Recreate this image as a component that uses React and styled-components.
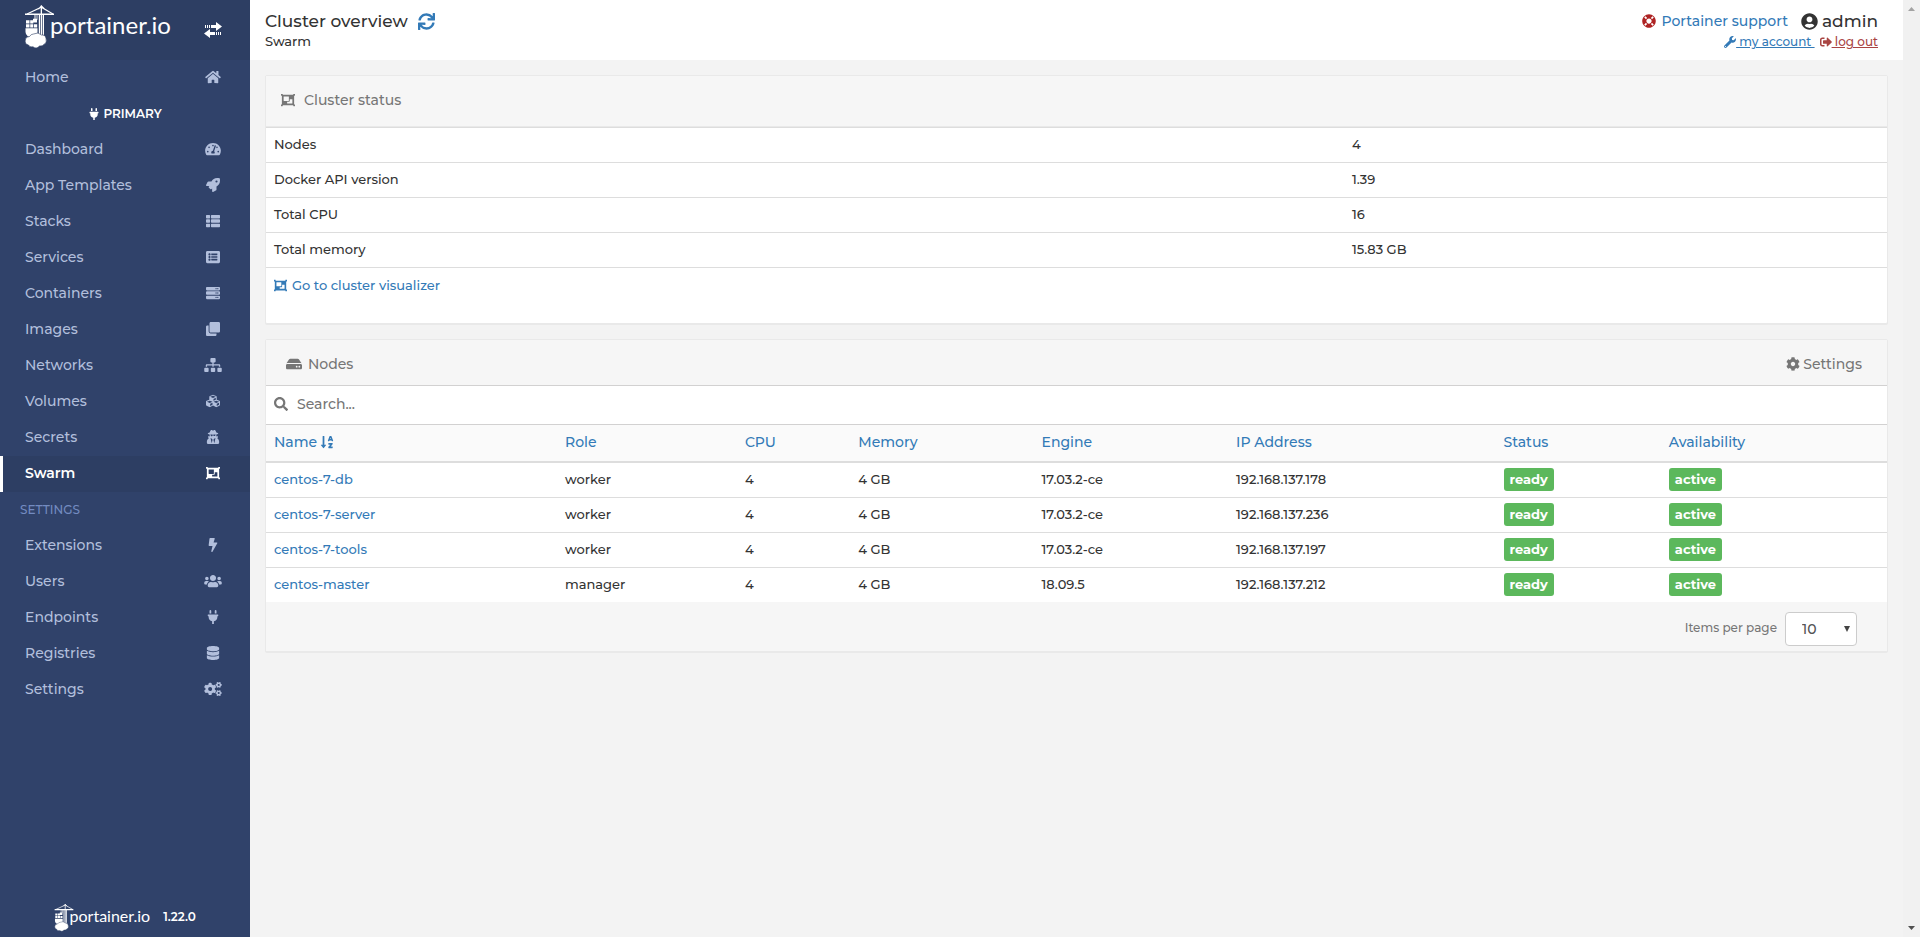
import React from 'react';
import styled, { createGlobalStyle, css } from 'styled-components';
import {
  FaHome, FaPlug, FaTachometerAlt, FaRocket, FaThList, FaListAlt, FaServer, FaClone, FaSitemap,
  FaCubes, FaUserSecret, FaObjectGroup, FaBolt, FaUsers, FaDatabase, FaCogs, FaSearch, FaHdd,
  FaCog, FaSortAlphaDown, FaWrench, FaSignOutAlt, FaUserCircle, FaLifeRing, FaSync,
} from 'react-icons/fa';

const GlobalStyle = createGlobalStyle`
  *, *::before, *::after { box-sizing: border-box; }
  body {
    margin: 0;
    background: #f3f3f3;
    color: #333;
    font-family: Montserrat, Inter, "Liberation Sans", sans-serif;
    font-size: 13px;
    font-weight: 500;
    line-height: 20px;
  }
  a { color: #337ab7; text-decoration: none; }
  svg { display: block; flex: none; }
`;

const Page = styled.div`
  display: flex;
  min-height: 100vh;
`;

const Sidebar = styled.nav`
  flex: 0 0 250px;
  display: flex;
  flex-direction: column;
  background: #30426a;
`;

const SidebarHeader = styled.div`
  height: 60px;
  padding: 4px 28px 0 24px;
  display: flex;
  justify-content: space-between;
  align-items: flex-start;
  background: #2d3e63;
  color: #fff;
`;

const LogoBox = styled.span`
  display: flex;
  align-items: flex-start;
  color: #fff;
`;

const LogoText = styled.span`
  margin-left: -4px;
  font-family: "Century Gothic", Lato, sans-serif;
  font-size: ${(p) => (p.$small ? 16 : 24)}px;
  font-weight: 400;
  line-height: ${(p) => (p.$small ? 26 : 42)}px;
`;

const ToggleButton = styled.button`
  margin: 18px 0 0;
  padding: 0;
  border: 0;
  background: none;
  color: #fff;
  cursor: pointer;
`;

const Menu = styled.ul`
  list-style: none;
  margin: 0;
  padding: 0;
  flex: 1;
`;

const MenuLink = styled.a`
  display: flex;
  align-items: center;
  justify-content: space-between;
  height: 36px;
  padding: 0 28px 2px 22px;
  border-left: 3px solid transparent;
  font-size: 14px;
  color: #b2bfdc;
  ${(p) => p.$active && css`
    color: #fff;
    font-weight: 600;
    background: #2d3e63;
    border-left-color: #fff;
  `}
`;

const IconSlot = styled.span`
  width: 18px;
  display: flex;
  justify-content: center;
  svg {
    width: ${(p) => p.$width}px;
    height: 14px;
  }
`;

const EndpointTitle = styled.li`
  height: 36px;
  display: flex;
  align-items: center;
  justify-content: center;
  gap: 3px;
  font-size: 12px;
  font-weight: 600;
  color: #fff;
`;

const SectionTitle = styled.li`
  height: 36px;
  padding-left: 20px;
  line-height: 36px;
  font-size: 12px;
  color: #738bc0;
`;

const SidebarFooter = styled.div`
  display: flex;
  align-items: flex-start;
  justify-content: center;
  gap: 13px;
  height: 34px;
  color: #fff;
`;

const Version = styled.span`
  font-size: 12px;
  font-weight: 600;
  line-height: 28px;
`;

const Content = styled.div`
  flex: 1;
  min-width: 0;
`;

const TopBar = styled.header`
  height: 60px;
  padding: 11px 25px 0 15px;
  display: flex;
  justify-content: space-between;
  background: #fff;
`;

const TitleRow = styled.div`
  display: flex;
  align-items: center;
  justify-content: ${(p) => (p.$end ? 'flex-end' : 'flex-start')};
  gap: 10px;
`;

const PageTitle = styled.h1`
  margin: 0;
  font-size: 17px;
  font-weight: 500;
  line-height: 20px;
`;

const IconButton = styled.button`
  padding: 0;
  border: 0;
  background: none;
  color: #337ab7;
  cursor: pointer;
`;

const SupportLink = styled.a`
  display: flex;
  align-items: center;
  gap: 6px;
  margin-right: 3px;
  font-size: 14px;
  svg { color: #ae2323; }
`;

const UserName = styled.span`
  display: flex;
  align-items: center;
  gap: 4px;
  font-size: 17px;
`;

const AccountLink = styled.a`
  display: inline-flex;
  align-items: center;
  font-size: 12px;
  color: ${(p) => (p.$danger ? '#a94442' : '#337ab7')};
  span { text-decoration: underline; white-space: pre; }
`;

const AccountRow = styled.div`
  display: flex;
  justify-content: flex-end;
  gap: 5px;
  padding-top: 1px;
`;

const Main = styled.main`
  padding: 15px;
  display: flex;
  flex-direction: column;
  gap: 15px;
`;

const Widget = styled.section`
  background: #fff;
  border: 1px solid #e9e9e9;
  border-radius: 2px;
  box-shadow: 0 1px 0 #e9e9e9;
`;

const WidgetHeader = styled.div`
  height: 51px;
  padding: 0 15px 2px;
  display: flex;
  align-items: center;
  background: #f6f6f6;
  border-bottom: 1px solid #e9e9e9;
`;

const WidgetTitle = styled.h2`
  display: flex;
  align-items: center;
  gap: ${(p) => p.$gap}px;
  margin: 0;
  font-size: 14px;
  font-weight: 500;
  color: #767676;
`;

const InfoTable = styled.table`
  width: 100%;
  table-layout: fixed;
  border-collapse: separate;
  border-spacing: 0;
  th, td {
    height: 35px;
    padding: 0 8px 3px;
    border-top: 1px solid #ddd;
    font-weight: 500;
    text-align: left;
  }
  th { width: 66.5%; }
`;

const VisualizerCell = styled.div`
  height: 56px;
  padding: 7px 8px;
  border-top: 1px solid #ddd;
`;

const VisualizerLink = styled.a`
  display: inline-flex;
  align-items: center;
  gap: 5px;
`;

const ToolBar = styled.div`
  height: 46px;
  padding: 3px 25px 0 20px;
  display: flex;
  align-items: center;
  justify-content: space-between;
  background: #f6f6f6;
  border-bottom: 1px solid #d2d1d1;
  font-size: 14px;
  color: #767676;
`;

const SettingsButton = styled.button`
  display: flex;
  align-items: center;
  gap: 3px;
  padding: 0;
  border: 0;
  background: none;
  font: inherit;
  color: inherit;
  cursor: pointer;
`;

const SearchBar = styled.label`
  height: 39px;
  padding: 0 8px 2px;
  display: flex;
  align-items: center;
  gap: 9px;
  border-bottom: 1px solid #d2d1d1;
  color: #767676;
`;

const SearchInput = styled.input`
  flex: 1;
  border: 0;
  outline: 0;
  padding: 0;
  background: none;
  font: inherit;
  font-size: 14px;
  &::placeholder { color: #767676; opacity: 1; }
`;

const NodesTable = styled.table`
  width: 100%;
  table-layout: fixed;
  border-collapse: separate;
  border-spacing: 0;
  th {
    height: 38px;
    padding: 0 8px 2px;
    background: #fafafa;
    border-bottom: 2px solid #ddd;
    font-size: 14px;
    font-weight: 500;
    text-align: left;
  }
  td {
    height: 35px;
    padding: 0 8px 2px;
    border-bottom: 1px solid #ddd;
  }
  tbody tr:last-child td { border-bottom: 0; height: 34px; }
`;

const SortLink = styled.a`
  display: inline-flex;
  align-items: center;
  gap: 3px;
`;

const Badge = styled.span`
  display: inline-block;
  height: 23px;
  padding: 0 6px;
  border-radius: 3px;
  background: #5cb85c;
  color: #fff;
  font-weight: 700;
  line-height: 22px;
  vertical-align: middle;
`;

const TableFooter = styled.div`
  height: 49px;
  padding: 0 30px 0 0;
  display: flex;
  align-items: center;
  justify-content: flex-end;
  gap: 8px;
  background: #f6f6f6;
  color: #767676;
  font-size: 12px;
  label { padding-top: 2px; }
`;

const SelectWrap = styled.span`
  position: relative;
  margin-top: 5px;
  &::after {
    content: "";
    position: absolute;
    right: 7px;
    top: 14px;
    border: 3px solid transparent;
    border-top: 6px solid #444;
    border-bottom: 0;
    pointer-events: none;
  }
`;

const PageSelect = styled.select`
  appearance: none;
  display: block;
  width: 72px;
  height: 34px;
  padding: 0 16px;
  border: 1px solid #ccc;
  border-radius: 4px;
  background: #fff;
  color: #555;
  font: inherit;
  font-size: 14px;
`;

const ScrollTrack = styled.div`
  flex: 0 0 17px;
  display: flex;
  flex-direction: column;
  justify-content: space-between;
  align-items: center;
  padding: 7px 0;
  background: #f1f1f1;
  color: #a3a3a3;
`;

function CraneMark({ size }) {
  return (
    <svg width={size * 30 / 45} height={size} viewBox="0 0 30 45" fill="currentColor" aria-hidden="true">
      <path d="M1 9.5h29v1.6H1zM16.7 1.5h1.3v9h-1.3zM14.8 11h1.4v20h-1.4zM16.9 11h1.2v20h-1.2zM18.8 11h1.2v20h-1.2z" />
      <path d="M3 10 17.3 3.200 29 10M14.500 5l3-3 3 3" fill="none" stroke="currentColor" strokeWidth="1.1" />
      <path d="M10.500 11h1v5h-1zM12.600 11h.8v5h-.8zM9 14.800h4v3.800H9zM2 16.200h3.500v3.200H2zM6.200 16.200h3.100v3.200H6.200zM2 20.200h3.500v3.200H2zM6.200 20.200h3.100v3.200H6.200zM10 20.200h3.200v3.200H10zM1.500 24.300h12v7.200q-3 2-6 .5-2 1.500-4 0-2-2-2-4z" />
      <path d="M9.500 30q5-2.500 8 1 4-.5 4.500 3.500 1.500 4-2 6-1.500 1.800-4.500 1.500-3 3.500-6.500.8Q5.500 43.500 4.500 41 .5 40 1.300 36 1.500 32.500 5.500 32.500 7 30 9.500 30z" stroke="#2d3e63" strokeWidth=".6" />
    </svg>
  );
}

function TransferIcon() {
  return (
    <svg width="18" height="16" viewBox="0 0 18 16" fill="currentColor" aria-hidden="true">
      <path d="M1 3h1v3H1zM3 3h1v3H3zM5 3h1v3H5zM7 3h5V0l6 4.500L12 9V6H7zM17 10h-1v3h1zM15 10h-1v3h1zM13 10h-1v3h1zM11 10H6V7l-6 4.500L6 16v-3h5z" />
    </svg>
  );
}

function Logo({ small }) {
  return (
    <LogoBox>
      <CraneMark size={small ? 29 : 45} />
      <LogoText $small={small}>portainer.io</LogoText>
    </LogoBox>
  );
}

function MenuItem({ label, icon: Icon, iconWidth = 14, active }) {
  return (
    <li>
      <MenuLink href="#" $active={active} aria-current={active ? 'page' : undefined}>
        {label}
        <IconSlot $width={iconWidth}><Icon /></IconSlot>
      </MenuLink>
    </li>
  );
}

const endpointMenu = [
  ['Dashboard', FaTachometerAlt, 16],
  ['App Templates', FaRocket],
  ['Stacks', FaThList],
  ['Services', FaListAlt],
  ['Containers', FaServer],
  ['Images', FaClone],
  ['Networks', FaSitemap, 18],
  ['Volumes', FaCubes],
  ['Secrets', FaUserSecret],
  ['Swarm', FaObjectGroup],
];

const settingsMenu = [
  ['Extensions', FaBolt],
  ['Users', FaUsers, 18],
  ['Endpoints', FaPlug],
  ['Registries', FaDatabase],
  ['Settings', FaCogs, 18],
];

const clusterInfo = [
  ['Nodes', '4'],
  ['Docker API version', '1.39'],
  ['Total CPU', '16'],
  ['Total memory', '15.83 GB'],
];

const columns = [
  ['Name', 17.95], ['Role', 11.1], ['CPU', 7], ['Memory', 11.3], ['Engine', 12],
  ['IP Address', 16.5], ['Status', 10.2], ['Availability', 13.95],
];

const nodes = [
  ['centos-7-db', 'worker', '17.03.2-ce', '192.168.137.178'],
  ['centos-7-server', 'worker', '17.03.2-ce', '192.168.137.236'],
  ['centos-7-tools', 'worker', '17.03.2-ce', '192.168.137.197'],
  ['centos-master', 'manager', '18.09.5', '192.168.137.212'],
];

export default function App() {
  return (
    <Page>
      <GlobalStyle />
      <Sidebar>
        <SidebarHeader>
          <Logo />
          <ToggleButton aria-label="Toggle sidebar"><TransferIcon /></ToggleButton>
        </SidebarHeader>
        <Menu>
          <MenuItem label="Home" icon={FaHome} iconWidth={16} />
          <EndpointTitle><FaPlug size={12} />PRIMARY</EndpointTitle>
          {endpointMenu.map(([label, icon, width]) => (
            <MenuItem key={label} label={label} icon={icon} iconWidth={width} active={label === 'Swarm'} />
          ))}
          <SectionTitle>SETTINGS</SectionTitle>
          {settingsMenu.map(([label, icon, width]) => (
            <MenuItem key={label} label={label} icon={icon} iconWidth={width} />
          ))}
        </Menu>
        <SidebarFooter>
          <Logo small />
          <Version>1.22.0</Version>
        </SidebarFooter>
      </Sidebar>
      <Content>
        <TopBar>
          <div>
            <TitleRow>
              <PageTitle>Cluster overview</PageTitle>
              <IconButton aria-label="Refresh"><FaSync size={17} /></IconButton>
            </TitleRow>
            <div>Swarm</div>
          </div>
          <div>
            <TitleRow $end>
              <SupportLink href="#"><FaLifeRing size={14} />Portainer support</SupportLink>
              <UserName><FaUserCircle size={17} />admin</UserName>
            </TitleRow>
            <AccountRow>
              <AccountLink href="#"><FaWrench size={12} /><span> my account </span></AccountLink>
              <AccountLink href="#" $danger><FaSignOutAlt size={12} /><span> log out</span></AccountLink>
            </AccountRow>
          </div>
        </TopBar>
        <Main>
          <Widget>
            <WidgetHeader>
              <WidgetTitle $gap={9}><FaObjectGroup size={14} />Cluster status</WidgetTitle>
            </WidgetHeader>
            <InfoTable>
              <tbody>
                {clusterInfo.map(([name, value]) => (
                  <tr key={name}><th scope="row">{name}</th><td>{value}</td></tr>
                ))}
              </tbody>
            </InfoTable>
            <VisualizerCell>
              <VisualizerLink href="#"><FaObjectGroup size={13} />Go to cluster visualizer</VisualizerLink>
            </VisualizerCell>
          </Widget>
          <Widget>
            <ToolBar>
              <WidgetTitle $gap={6}><FaHdd size={16} />Nodes</WidgetTitle>
              <SettingsButton><FaCog size={14} />Settings</SettingsButton>
            </ToolBar>
            <SearchBar>
              <FaSearch size={14} />
              <SearchInput type="text" placeholder="Search..." aria-label="Search nodes" />
            </SearchBar>
            <NodesTable>
              <colgroup>
                {columns.map(([name, width]) => <col key={name} width={`${width}%`} />)}
              </colgroup>
              <thead>
                <tr>
                  {columns.map(([name]) => (
                    <th key={name} scope="col">
                      <SortLink href="#">{name}{name === 'Name' && <FaSortAlphaDown size={14} />}</SortLink>
                    </th>
                  ))}
                </tr>
              </thead>
              <tbody>
                {nodes.map(([name, role, engine, ip]) => (
                  <tr key={name}>
                    <td><a href="#">{name}</a></td>
                    <td>{role}</td>
                    <td>4</td>
                    <td>4 GB</td>
                    <td>{engine}</td>
                    <td>{ip}</td>
                    <td><Badge>ready</Badge></td>
                    <td><Badge>active</Badge></td>
                  </tr>
                ))}
              </tbody>
            </NodesTable>
            <TableFooter>
              <label htmlFor="page-size">Items per page</label>
              <SelectWrap>
                <PageSelect id="page-size" defaultValue="10">
                  <option>10</option>
                  <option>25</option>
                  <option>50</option>
                  <option>100</option>
                </PageSelect>
              </SelectWrap>
            </TableFooter>
          </Widget>
        </Main>
      </Content>
      <ScrollTrack aria-hidden="true">
        <svg width="7" height="4" fill="currentColor"><path d="M0 4 3.500 0 7 4z" /></svg>
        <svg width="7" height="4" fill="#505050"><path d="M0 0 3.500 4 7 0z" /></svg>
      </ScrollTrack>
    </Page>
  );
}
